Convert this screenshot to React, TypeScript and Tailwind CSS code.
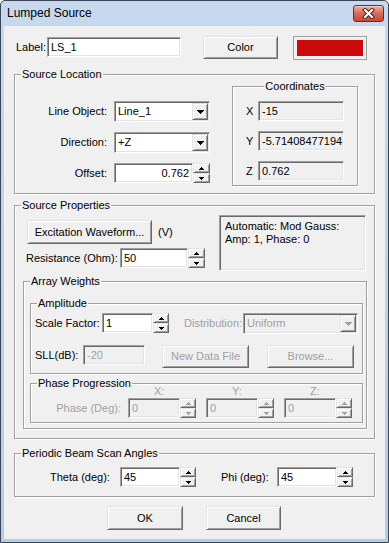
import React from "react";

// classic win32 bevels
const sunken =
  "border border-t-[#a0a0a0] border-l-[#a0a0a0] border-b-white border-r-white shadow-[inset_1px_1px_0_#696969,inset_-1px_-1px_0_#e3e3e3]";
const raised =
  "border border-t-[#e3e3e3] border-l-[#e3e3e3] border-b-[#696969] border-r-[#696969] shadow-[inset_1px_1px_0_#fff,inset_-1px_-1px_0_#a0a0a0]";

const DIM = "#a0a0a0";

function Edit({
  className = "", value, right = false, ro = false, dim = false,
}: { className?: string; value: string; right?: boolean; ro?: boolean; dim?: boolean }) {
  return (
    <div
      className={`flex items-center shrink-0 overflow-hidden whitespace-nowrap ${sunken} ${ro ? "bg-[#f0f0f0]" : "bg-white"} ${dim ? "text-[#a0a0a0]" : "text-black"} ${right ? "justify-end pr-[3px]" : "pl-[3px]"} ${className}`}
    >
      {value}
    </div>
  );
}

function SpinBtn({ up, dim }: { up?: boolean; dim?: boolean }) {
  return (
    <div className={`flex-1 flex items-center justify-center bg-[#f0f0f0] ${raised}`}>
      <svg width="5" height="3" viewBox="0 0 5 3" shapeRendering="crispEdges">
        <path
          d={up ? "M2 0h1v1H2zM1 1h3v1H1zM0 2h5v1H0z" : "M0 0h5v1H0zM1 1h3v1H1zM2 2h1v1H2z"}
          fill={dim ? DIM : "#000"}
        />
      </svg>
    </div>
  );
}

function Spinner({ dim, className = "w-[16px]" }: { dim?: boolean; className?: string }) {
  return (
    <div className={`flex flex-col shrink-0 h-[20px] ${className}`}>
      <SpinBtn up dim={dim} />
      <SpinBtn dim={dim} />
    </div>
  );
}

function Combo({ className = "", value, dim = false }: { className?: string; value: string; dim?: boolean }) {
  return (
    <div className={`flex items-stretch shrink-0 p-[1px] ${sunken} ${dim ? "bg-[#f0f0f0] text-[#a0a0a0]" : "bg-white"} ${className}`}>
      <div className="flex-1 flex items-center pl-[2px] whitespace-nowrap">{value}</div>
      <div className={`w-[16px] flex items-center justify-center bg-[#f0f0f0] ${raised}`}>
        <svg width="7" height="4" viewBox="0 0 7 4" shapeRendering="crispEdges">
          <path d="M0 0h7v1H0zM1 1h5v1H1zM2 2h3v1H2zM3 3h1v1H3z" fill={dim ? DIM : "#000"} />
        </svg>
      </div>
    </div>
  );
}

function Btn({ className = "", children, dim = false }: { className?: string; children: React.ReactNode; dim?: boolean }) {
  return (
    <div className={`flex items-center justify-center shrink-0 bg-[#f0f0f0] whitespace-nowrap ${raised} ${dim ? "text-[#a0a0a0]" : ""} ${className}`}>
      {children}
    </div>
  );
}

function Group({
  title, className = "", center = false, children,
}: { title: string; className?: string; center?: boolean; children?: React.ReactNode }) {
  return (
    <div className={`relative shrink-0 border border-[#a0a0a0] shadow-[inset_1px_1px_0_#fff,1px_1px_0_#fff] ${className}`}>
      <span
        className={`absolute -top-[7px] bg-[#f0f0f0] px-[1px] leading-[13px] whitespace-nowrap ${center ? "left-1/2 -translate-x-1/2" : "left-[6px]"}`}
      >
        {title}
      </span>
      {children}
    </div>
  );
}

function CloseButton() {
  return (
    <div className="ml-auto mr-[4px] mt-[4px] w-[31px] h-[17px] rounded-[3px] border border-[#6b2a22] bg-gradient-to-b from-[#eab0a2] via-[#d66a5a] to-[#c9473a] shadow-[inset_0_1px_0_#f6d3cb] flex items-center justify-center">
      <svg width="13" height="11" viewBox="0 0 13 11">
        <path d="M3 2L10 9M10 2L3 9" stroke="#4a2520" strokeWidth="4" strokeLinecap="square" />
        <path d="M3 2L10 9M10 2L3 9" stroke="#fff" strokeWidth="2" strokeLinecap="square" />
      </svg>
    </div>
  );
}

export default function App() {
  return (
    <div className="w-[389px] h-[543px] bg-white font-['Liberation_Sans',Arial,sans-serif] text-[11px] leading-[13px] text-black">
      <div className="flex flex-col w-full h-full border border-[#3a4656] rounded-t-[5px] bg-gradient-to-b from-[#c6d9ee] to-[#b4cde8] overflow-hidden">
        {/* title bar */}
        <div className="flex items-start h-[25px] shrink-0">
          <span className="ml-[6px] mt-[5px] text-[12px] leading-[15px] text-black">Lumped Source</span>
          <CloseButton />
        </div>

        {/* client area */}
        <div className="mx-[3px] mb-[3px] flex-1 bg-[#f0f0f0] flex flex-col">
          <div className="flex items-start pt-[10px] pl-[12px] h-[34px] shrink-0">
            <span className="w-[31px] h-[20px] mt-[1px] flex items-center">Label:</span>
            <Edit className="w-[134px] h-[20px] mt-[1px]" value="LS_1" />
            <Btn className="ml-[22px] w-[75px] h-[23px]">Color</Btn>
            <div className="ml-[15px] w-[74px] h-[24px] p-[3px] flex border border-[#a0a0a0] bg-[#f0f0f0]">
              <div className="flex-1 bg-[#cc0a0a]" />
            </div>
          </div>

          <Group title="Source Location" className="ml-[10px] mt-[14px] w-[361px] h-[120px]">
            <div className="flex items-start">
              <div className="flex flex-col pt-[26px]">
                <div className="flex items-center">
                  <span className="w-[92px] text-right">Line Object:</span>
                  <Combo className="ml-[7px] w-[96px] h-[21px]" value="Line_1" />
                </div>
                <div className="flex items-center mt-[10px]">
                  <span className="w-[92px] text-right">Direction:</span>
                  <Combo className="ml-[7px] w-[96px] h-[21px]" value="+Z" />
                </div>
                <div className="flex items-center mt-[10px]">
                  <span className="w-[92px] text-right">Offset:</span>
                  <Edit className="ml-[7px] w-[79px] h-[20px]" value="0.762" right />
                  <Spinner className="w-[17px]" />
                </div>
              </div>
              <Group title="Coordinates" center className="ml-[22px] mt-[11px] w-[126px] h-[100px]">
                <div className="flex flex-col gap-[10px] pt-[14px]">
                  {[["X", "-15"], ["Y", "-5.71408477194"], ["Z", "0.762"]].map(([k, v]) => (
                    <div key={k} className="flex items-center">
                      <span className="w-[25px] pl-[13px]">{k}</span>
                      <Edit className="w-[86px] h-[20px]" value={v} ro />
                    </div>
                  ))}
                </div>
              </Group>
            </div>
          </Group>

          <Group title="Source Properties" className="ml-[10px] mt-[11px] w-[361px] h-[234px]">
            <div className="flex items-start">
              <div className="w-[204px] flex flex-col pt-[14px]">
                <div className="flex items-center pl-[12px]">
                  <Btn className="w-[125px] h-[24px]">Excitation Waveform...</Btn>
                  <span className="ml-[6px]">(V)</span>
                </div>
                <div className="flex items-center mt-[4px] pl-[11px]">
                  <span className="w-[94px]">Resistance (Ohm):</span>
                  <Edit className="w-[68px] h-[20px]" value="50" />
                  <Spinner className="w-[17px]" />
                </div>
              </div>
              <div className={`mt-[9px] w-[147px] h-[56px] pt-[4px] pl-[5px] bg-[#f0f0f0] ${sunken}`}>
                <div>Automatic: Mod Gauss:</div>
                <div>Amp: 1, Phase: 0</div>
              </div>
            </div>

            <Group title="Array Weights" className="ml-[8px] mt-[10px] w-[344px] h-[148px]">
              <Group title="Amplitude" className="ml-[6px] mt-[21px] w-[333px] h-[71px]">
                <div className="flex items-start pt-[9px] pl-[4px]">
                  <span className="w-[67px] h-[20px] flex items-center">Scale Factor:</span>
                  <Edit className="w-[51px] h-[20px]" value="1" />
                  <Spinner />
                  <span className="ml-[15px] w-[59px] h-[21px] flex items-center text-[#a0a0a0]">Distribution:</span>
                  <Combo className="w-[115px] h-[21px]" value="Uniform" dim />
                </div>
                <div className="flex items-start mt-[11px] pl-[4px]">
                  <span className="w-[48px] h-[20px] flex items-center">SLL(dB):</span>
                  <Edit className="w-[62px] h-[20px]" value="-20" ro dim />
                  <Btn className="ml-[17px] w-[87px] h-[23px]" dim>New Data File</Btn>
                  <Btn className="ml-[18px] w-[87px] h-[23px]" dim>Browse...</Btn>
                </div>
              </Group>

              <Group title="Phase Progression" className="ml-[6px] mt-[9px] w-[333px] h-[40px]">
                <div className="flex h-[13px] mt-[1px] pl-[97px] text-[#a0a0a0]">
                  {["X:", "Y:", "Z:"].map((k) => (
                    <span key={k} className="w-[68px] mr-[10px] pl-[26px]">{k}</span>
                  ))}
                </div>
                <div className="flex items-center">
                  <span className="w-[97px] pr-[7px] text-right text-[#a0a0a0]">Phase (Deg):</span>
                  {["x", "y", "z"].map((k, i) => (
                    <div key={k} className={`flex ${i > 0 ? "ml-[10px]" : ""}`}>
                      <Edit className="w-[52px] h-[20px]" value="0" ro dim />
                      <Spinner dim />
                    </div>
                  ))}
                </div>
              </Group>
            </Group>
          </Group>

          <Group title="Periodic Beam Scan Angles" className="ml-[10px] mt-[14px] w-[361px] h-[44px]">
            <div className="flex items-center pt-[13px]">
              <span className="pl-[35px] w-[105px]">Theta (deg):</span>
              <Edit className="w-[60px] h-[20px]" value="45" />
              <Spinner />
              <span className="ml-[25px] w-[56px]">Phi (deg):</span>
              <Edit className="w-[60px] h-[20px]" value="45" />
              <Spinner />
            </div>
          </Group>

          <div className="flex mt-[9px] pl-[103px]">
            <Btn className="w-[76px] h-[24px]">OK</Btn>
            <Btn className="ml-[23px] w-[75px] h-[24px]">Cancel</Btn>
          </div>
        </div>
      </div>
    </div>
  );
}
